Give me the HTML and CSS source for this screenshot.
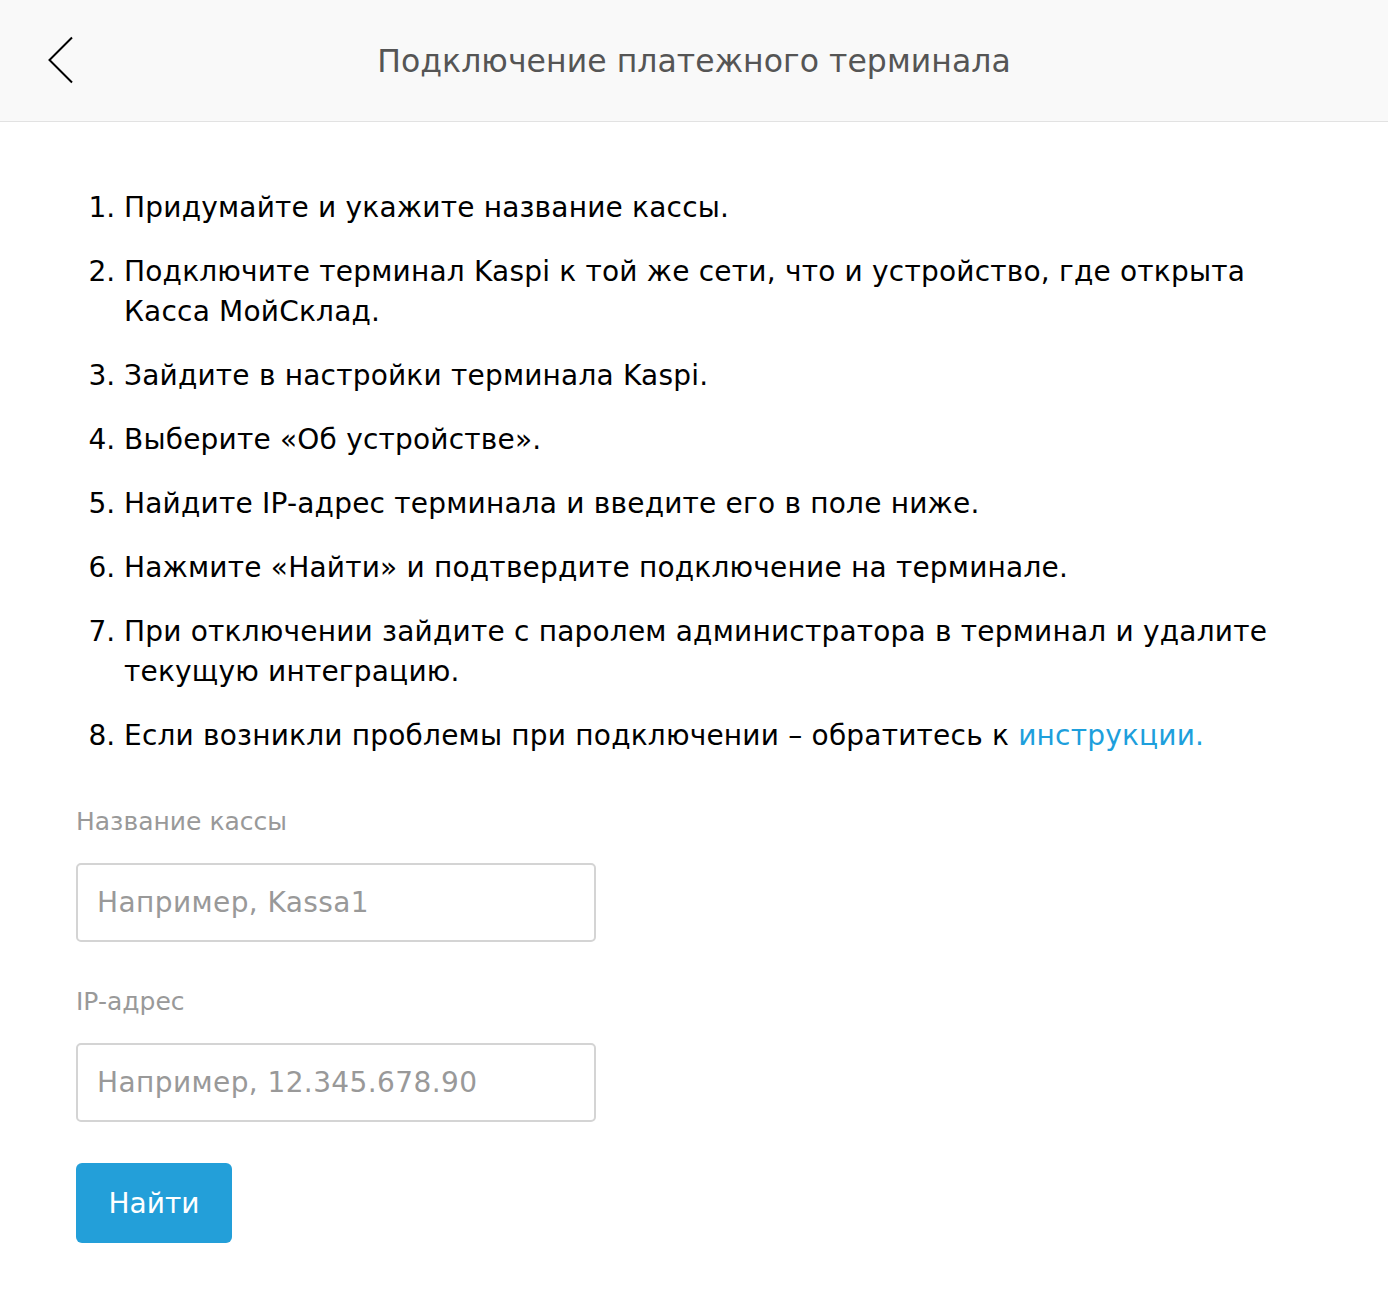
FILE: index.html
```html
<!DOCTYPE html>
<html lang="ru">
<head>
<meta charset="utf-8">
<title>Подключение платежного терминала</title>
<link rel="stylesheet" href="styles.css">
</head>
<body>
<header class="topbar">
  <button class="back" aria-label="Назад">
    <svg width="26" height="48" viewBox="0 0 26 48"><path d="M24 1.5 L1.5 24 L24 46.5" fill="none" stroke="#000" stroke-width="2"/></svg>
  </button>
  <h1 class="title">Подключение платежного терминала</h1>
</header>
<main class="content">
  <ol class="steps">
    <li>Придумайте и укажите название кассы.</li>
    <li>Подключите терминал Kaspi к той же сети, что и устройство, где открыта Касса МойСклад.</li>
    <li>Зайдите в настройки терминала Kaspi.</li>
    <li>Выберите «Об устройстве».</li>
    <li>Найдите IP-адрес терминала и введите его в поле ниже.</li>
    <li>Нажмите «Найти» и подтвердите подключение на терминале.</li>
    <li>При отключении зайдите с паролем администратора в терминал и удалите текущую интеграцию.</li>
    <li>Если возникли проблемы при подключении – обратитесь к <a class="link" href="#">инструкции.</a></li>
  </ol>
  <form class="form">
    <label class="field">
      <span class="label">Название кассы</span>
      <input class="input" type="text" placeholder="Например, Kassa1">
    </label>
    <label class="field">
      <span class="label">IP-адрес</span>
      <input class="input" type="text" placeholder="Например, 12.345.678.90">
    </label>
    <button class="btn" type="button">Найти</button>
  </form>
</main>
</body>
</html>
```
FILE: styles.css
```css
* { box-sizing: border-box; }
html, body { margin: 0; padding: 0; background: #fff; }
body { font-family: "DejaVu Sans", "Liberation Sans", sans-serif; color: #000; }

.topbar {
  height: 122px;
  background: #f9f9f9;
  border-bottom: 1px solid #e2e2e2;
  display: flex;
  align-items: center;
  justify-content: center;
  position: relative;
}
.back {
  position: absolute;
  left: 48px;
  top: 36px;
  border: 0;
  background: none;
  padding: 0;
  width: 26px;
  height: 48px;
  display: block;
}
.back svg { display: block; }
.title {
  margin: 0;
  font-weight: normal;
  font-size: 31.5px;
  color: #555;
  letter-spacing: 0.05px;
}

.content { padding: 66px 76px 60px; }

.steps {
  margin: 0;
  padding: 0 0 0 48px;
  font-size: 28px;
  line-height: 40px;
  letter-spacing: 0.2px;
  display: flex;
  flex-direction: column;
  gap: 24px;
}
.steps li::marker { letter-spacing: 0; }
.link { color: #1e9fdc; text-decoration: none; }

.form {
  margin-top: 51px;
  display: flex;
  flex-direction: column;
  align-items: flex-start;
}
.field {
  display: flex;
  flex-direction: column;
  gap: 26px;
  margin-bottom: 45px;
}
.field + .field { margin-bottom: 41px; }
.label {
  font-size: 25px;
  line-height: 30px;
  color: #999;
}
.input {
  width: 520px;
  height: 79px;
  border: 2px solid #d4d4d4;
  border-radius: 5px;
  padding: 0 19px;
  font-family: "DejaVu Sans", "Liberation Sans", sans-serif;
  font-size: 28px;
  letter-spacing: 0.4px;
  color: #333;
  background: #fff;
  outline: none;
}
.input::placeholder { color: #999; }
.btn {
  width: 156px;
  height: 80px;
  background: #239fd9;
  color: #fff;
  border: 0;
  border-radius: 6px;
  font-family: "DejaVu Sans", "Liberation Sans", sans-serif;
  font-size: 28px;
  padding: 0;
}
```
